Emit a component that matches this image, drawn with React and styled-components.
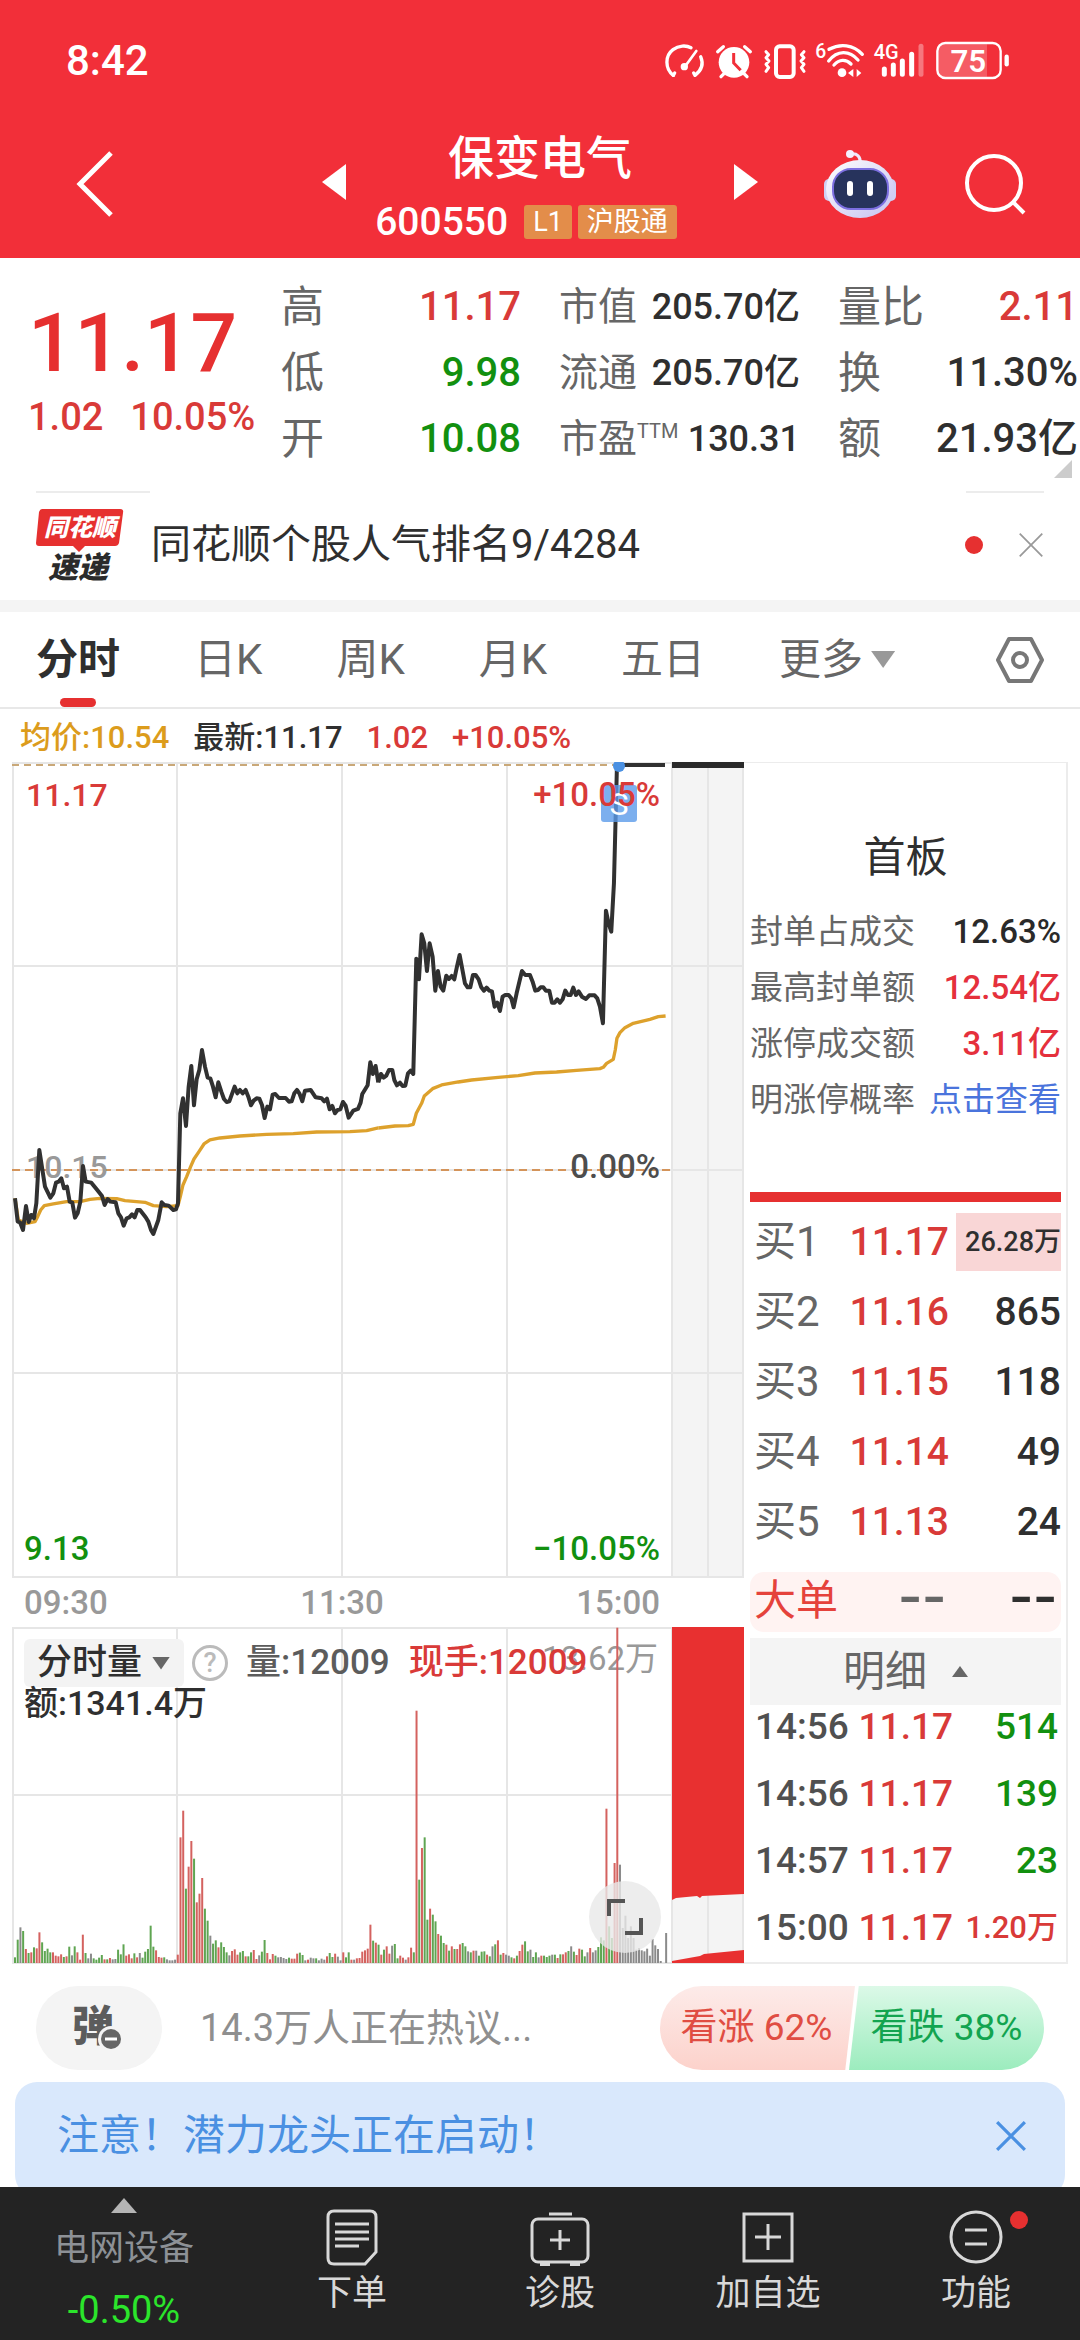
import React from "react";
import styled, { createGlobalStyle } from "styled-components";

const GlobalStyle = createGlobalStyle`
  * {
    box-sizing: border-box;
  }
  body {
    margin: 0;
    background: #fff;
    color: #2f2f2f;
    font-family: Roboto, "Noto Sans CJK SC", sans-serif;
  }
  button {
    margin: 0;
    padding: 0;
    border: 0;
    background: none;
    color: inherit;
    font: inherit;
    cursor: pointer;
  }
  a {
    color: inherit;
    text-decoration: none;
  }
  svg {
    display: block;
  }
`;

const RED = "#d93a38";
const GREEN = "#12900f";

/* chart points, three units to a pixel */
const PRICE_MORNING =
  "45,895 53,965 60,967 69,990 78,918 86,966 94,945 102,955 109,910 118,750 135,860 151,893 160,880 168,848 176,845 184,835 192,865 201,860 209,905 217,908 225,953 233,940 241,905 249,798 257,845 274,848 290,868 306,888 314,915 323,897 331,905 347,907 355,940 363,952 371,977 380,955 388,952 396,943 404,952 412,930 420,930 437,952 445,965 453,990 460,1002 475,960 485,907 493,915 506,917 520,930 528,928 534,910 541,640 549,595 558,678 566,560 574,498 582,616 590,538 598,510 606,450 615,500 623,533 631,535 639,560 647,592 655,547 664,575 672,597 680,606 688,604 704,560 712,580 720,570 728,580 737,570 745,590 753,616 761,602 770,595 778,596 786,615 794,654 802,620 810,628 818,584 826,582 837,594 857,594 867,605 875,604 883,580 891,570 899,582 907,604 915,572 932,570 947,592 965,595 973,604 981,596 989,628 997,618 1005,640 1013,630 1021,628 1029,606 1037,617 1046,653 1060,632 1074,627 1082,608 1087,582 1103,556 1111,487 1119,522 1127,498 1135,547";
const PRICE_AFTERNOON =
  "25,547 33,522 41,533 49,527 57,510 67,510 73,540 81,556 90,548 98,558 106,557 114,520 122,512 130,522 139,176 147,238 155,103 163,130 171,213 179,130 188,170 196,272 204,213 212,260 220,272 229,227 237,237 245,228 253,238 261,200 269,165 285,250 293,262 301,262 309,225 317,225 326,238 334,262 342,272 350,263 358,272 366,274 374,320 382,308 390,333 398,290 406,285 416,285 424,295 431,322 440,280 456,213 466,225 480,225 488,245 496,272 504,270 512,262 520,262 528,272 538,272 546,308 554,308 562,298 570,308 578,298 586,272 594,285 602,285 610,263 618,285 626,274 636,290 648,297 658,286 674,286 682,295 690,320 699,370 708,32 716,70 724,95 732,-50 741,-402";
const AVG_MORNING =
  "45,895 55,960 80,970 105,965 113,950 122,930 133,917 160,912 200,905 240,905 270,898 300,895 350,896 375,902 435,907 460,917 500,920 534,917 541,890 549,855 560,830 572,800 582,777 597,755 612,732 630,720 660,714 720,708 800,703 880,701 950,696 1050,695 1100,692 1135,684";
const AVG_AFTERNOON =
  "25,684 75,678 115,677 130,673 139,640 155,610 163,588 188,566 215,555 265,546 305,540 385,532 445,527 495,519 560,516 620,511 690,506 700,502 710,490 730,478 736,450 741,415 750,398 765,383 790,370 840,358 865,350 887,348";

/* one bar a minute: height and r(ise), g(reen), k (flat) */
const VOLUME =
  "17g 70g 107k 96g 42r 30g 32r 47g 44r 92r 62g 36g 43g 32g 32r 22r 20r 26r 18g 20r 49g 23k 50g 32r 10r 85r 30g 14k 28k 14g 10g 16g 24g 11r 11g 15r 11k 12k 40g 26g 56g 22r 26r 14r 29g 17r 30k 16g 34g 42g 112g 49g 38r 18r 16r 17g 11k 8k 8k 10k 25r 377r 457r 223g 289r 366r 313g 182r 208r 255r 163g 127g 82k 58g 68g 47r 62g 48g 32g 23k 36r 41r 25r 32g 36g 20r 20g 32g 39r 12r 23k 34g 69g 30r 11r 27r 22g 17k 18k 15k 12k 16g 13r 13r 28r 31g 24g 8k 10r 16k 14k 14g 8k 13k 10k 20r 30g 18g 28r 19k 8k 32r 17g 32g 10r 10k 14r 15r 34r 38r 43r 115r 67g 61r 55g 25r 40g 50r 28r 52k 57g 14g 22r 16r 10k 17r 46r 32g 757r 250g 345r 377g 130g 163r 145g 125g 87r 82g 60g 55r 37g 50r 42g 42r 56r 60g 50g 35k 32g 37r 37k 22g 34g 35g 25r 20g 50k 56g 68r 25g 30r 25k 22k 17g 14r 22g 36r 55r 65g 35g 40k 18g 32g 17k 22r 22g 18g 22g 25k 25g 15r 26g 26r 32r 36g 50k 34g 24r 43r 40g 20g 32k 45r 32k 38k 48g 77g 68g 463r 110g 75g 300r 1006r 295k 105k 142k 75k 110k 75k 40k 45k 38k 35k 43k 22k 72k 53k 42k 6k 0k 90k"
    .split(" ")
    .map((item) => ({ size: parseInt(item, 10), kind: item.slice(-1) }));
const BAR_COLORS = { r: "#d4625f", g: "#5fa552", k: "#8b8b8b" };

const QUOTES = [
  [
    { label: "高", value: "11.17", color: RED },
    { label: "低", value: "9.98", color: GREEN },
    { label: "开", value: "10.08", color: GREEN },
  ],
  [
    { label: "市值", value: "205.70亿" },
    { label: "流通", value: "205.70亿" },
    { label: "市盈", note: "TTM", value: "130.31" },
  ],
  [
    { label: "量比", value: "2.11", color: RED },
    { label: "换", value: "11.30%" },
    { label: "额", value: "21.93亿" },
  ],
];

const LIMIT_ROWS = [
  { label: "封单占成交", value: "12.63%", color: "#2a2a2a" },
  { label: "最高封单额", value: "12.54亿", color: "#e5303c" },
  { label: "涨停成交额", value: "3.11亿", color: "#e5303c" },
];

const BUY_ROWS = [
  { label: "买1", price: "11.17", amount: "26.28万", active: true },
  { label: "买2", price: "11.16", amount: "865" },
  { label: "买3", price: "11.15", amount: "118" },
  { label: "买4", price: "11.14", amount: "49" },
  { label: "买5", price: "11.13", amount: "24" },
];

const DEALS = [
  { time: "14:56", price: "11.17", amount: "514" },
  { time: "14:56", price: "11.17", amount: "139" },
  { time: "14:57", price: "11.17", amount: "23" },
  { time: "15:00", price: "11.17", amount: "1.20万", up: true },
];

const StatusIcons = () => (
  <svg width="347" height="40" viewBox="69 60 1041 120" fill="none" stroke="#fff">
    <g strokeWidth="10" strokeLinecap="round">
      <path d="M100 163 C74 142 75 104 99 86 C116 73 138 72 153 80" />
      <path d="M182 107 C191 128 185 148 165 163 M100 163 L104 156 M165 163 L161 156" />
      <path d="M134 138 L169 90" strokeWidth="8" />
      <circle cx="133" cy="137" r="6" fill="#fff" />
    </g>
    <circle cx="282" cy="124" r="46" fill="#fff" stroke="none" />
    <path d="M233 92 L250 77 M331 92 L314 77 M252 158 L243 167 M312 158 L321 167" strokeWidth="10" strokeLinecap="round" />
    <path d="M281 96 V126 L302 148" stroke="#f22f39" strokeWidth="9" />
    <rect x="408" y="76" width="53" height="92" rx="11" strokeWidth="12" />
    <path
      d="M378 92 L386 101 L378 110 L387 120 L378 130 L386 140 L378 151 M492 92 L484 101 L492 110 L483 120 L492 130 L484 140 L492 151"
      strokeWidth="9"
      strokeLinecap="round"
      strokeLinejoin="round"
    />
    <text x="526" y="112" fill="#fff" stroke="none" fontSize="58" fontWeight="500">6</text>
    <path d="M567 85 C600 67 640 70 667 100 M566 120 C592 87 628 87 654 117 M582 132 C598 114 618 114 633 129" strokeWidth="10" strokeLinecap="round" />
    <circle cx="606" cy="155" r="13" fill="#fff" stroke="none" />
    <path d="M640 144 V168 L624 156 Z M650 144 V168 L664 156 Z" fill="#fff" stroke="none" />
    <text x="701" y="115" fill="#fff" stroke="none" fontSize="60" fontWeight="500">4G</text>
    <g strokeWidth="15" strokeLinecap="round">
      <path d="M733 144 V160 M760 132 V160 M787 120 V160 M815 100 V160" />
      <path d="M843 76 V160" opacity="0.35" />
    </g>
    <path d="M894 86 Q894 70 910 70 H1041 V167 H910 Q894 167 894 151 Z" fill="#fff" opacity="0.22" stroke="none" />
    <rect x="892" y="66" width="190" height="105" rx="24" strokeWidth="7" />
    <path d="M1100 107 V130" strokeWidth="13" strokeLinecap="round" />
    <text x="985" y="153" fill="#fff" stroke="none" fontSize="94" fontWeight="600" textAnchor="middle">75</text>
  </svg>
);

const RobotIcon = () => (
  <svg width="74" height="70" viewBox="0 0 74 70">
    <defs>
      <linearGradient id="shell" x1="0" y1="0" x2="1" y2="1">
        <stop offset="0" stopColor="#ffffff" />
        <stop offset="1" stopColor="#c5c1f0" />
      </linearGradient>
    </defs>
    <path d="M37 14 C38 8 34 4 28 5" fill="none" stroke="#efeafd" strokeWidth="3" />
    <circle cx="27" cy="5" r="4" fill="#f4f1ff" />
    <rect x="1" y="30" width="10" height="22" rx="5" fill="#cfd0f4" />
    <rect x="63" y="30" width="10" height="22" rx="5" fill="#cfd0f4" />
    <ellipse cx="37" cy="40" rx="34" ry="29" fill="url(#shell)" />
    <rect x="10" y="20" width="55" height="40" rx="18" fill="#27335c" stroke="#7c6fe0" strokeWidth="2" />
    <rect x="24" y="32" width="6" height="15" rx="3" fill="#fff" />
    <rect x="44" y="32" width="6" height="15" rx="3" fill="#fff" />
  </svg>
);

const BrandIcon = () => (
  <svg width="88" height="84" viewBox="0 -4 88 84">
    <path d="M6 2 H84 Q88 2 87 6 L83 36 Q82 39 79 39 H49 L43 45 L37 39 H3 Q0 39 0 36 L3 5 Q4 2 6 2 Z" fill="#e6302f" />
    <text x="44" y="29" textAnchor="middle" fontSize="24" fontWeight="900" fontStyle="italic" fill="#fff">同花顺</text>
    <text x="42" y="71" textAnchor="middle" fontSize="30" fontWeight="900" fontStyle="italic" fill="#2b2b2b">速递</text>
  </svg>
);

const Cross = ({ size, width }) => (
  <svg width={size} height={size} viewBox="0 0 30 30" fill="none" stroke="currentColor" strokeWidth={width}>
    <path d="M2 2 L28 28 M28 2 L2 28" />
  </svg>
);

const PriceChart = () => (
  <ChartSvg viewBox="0 0 732 816" role="img" aria-label="分时">
    <rect x="660" y="1" width="71" height="814" fill="#f4f4f4" />
    <g stroke="#e6e6e6" strokeWidth="2">
      <path d="M1 1 V815 M165 1 V815 M330 1 V815 M495 1 V815 M660 1 V815 M696 1 V815 M731 1 V815" />
      <path d="M0 1 H732 M0 204 H732 M0 408 H732 M0 611 H732 M0 815 H732" />
    </g>
    <path d="M0 3 H604" stroke="#c9a878" strokeWidth="2" strokeDasharray="7 5" />
    <path d="M0 408 H660" stroke="#d4945a" strokeWidth="2" strokeDasharray="8 5" />
    <text x="14" y="416" fontSize="32" fontWeight="500" fill="#999">10.15</text>
    <g transform="translate(-12 138) scale(0.3333)" fill="none" strokeLinejoin="round">
      <g stroke="#dda12c" strokeWidth="10">
        <polyline points={AVG_MORNING} />
        <polyline points={AVG_AFTERNOON} transform="translate(1110 0)" />
      </g>
      <g stroke="#313131" strokeWidth="12">
        <polyline points={PRICE_MORNING} />
        <polyline points={PRICE_AFTERNOON} transform="translate(1110 0)" />
      </g>
    </g>
    <path d="M605 3 H653" stroke="#313131" strokeWidth="4" />
    <path d="M660 3 H732" stroke="#2a2a2a" strokeWidth="6" />
    <circle cx="607" cy="4" r="6" fill="#4a90e2" />
    <rect x="589" y="23" width="36" height="37" rx="3" fill="#5b9bea" opacity="0.8" />
    <text x="607" y="53" textAnchor="middle" fontSize="32" fill="#fff">S</text>
    <g fontSize="33" fontWeight="500">
      <text x="14" y="44" fontSize="32" fill={RED}>11.17</text>
      <text x="648" y="44" fill={RED} textAnchor="end">+10.05%</text>
      <text x="648" y="416" fill="#4d4d4d" textAnchor="end">0.00%</text>
      <text x="12" y="798" fill={GREEN}>9.13</text>
      <text x="648" y="798" fill={GREEN} textAnchor="end">−10.05%</text>
    </g>
  </ChartSvg>
);

const VolumeChart = () => (
  <ChartSvg viewBox="0 0 732 337" role="img" aria-label="分时量">
    <rect x="660" y="0" width="71" height="336" fill="#f4f4f4" />
    <g stroke="#e6e6e6" strokeWidth="2">
      <path d="M1 1 V336 M165 1 V336 M330 1 V336 M495 1 V336 M660 1 V336 M696 1 V336 M731 1 V336" />
      <path d="M0 1 H732 M0 168 H660 M0 336 H732" />
    </g>
    <text x="646" y="43" fontSize="33" fill="#999" textAnchor="end">13.62万</text>
    <g transform="translate(3 336) scale(0.3333)">
      {VOLUME.map((bar, i) => (
        <rect key={i} x={i * 8.14 - 3} y={-bar.size} width="6" height={bar.size} fill={BAR_COLORS[bar.kind]} />
      ))}
    </g>
    <path d="M660 0 H732 V267 L690 269 L688 271 L685 269 L664 271 L660 273 Z" fill="#e83030" />
    <path d="M660 336 V334 L688 329 L692 327 L732 323 V336 Z" fill="#e83030" />
  </ChartSvg>
);

const App = () => {
  return (
    <Page>
      <GlobalStyle />
      <Top>
        <StatusBar>
          <span>8:42</span>
          <StatusIcons />
        </StatusBar>
        <TitleBar>
          <BackButton aria-label="返回">
            <svg width="38" height="66" viewBox="0 0 38 66" fill="none" stroke="#fff" strokeWidth="5">
              <path d="M35 2 L4 33 L35 64" />
            </svg>
          </BackButton>
          <Switcher>
            <button aria-label="上一只">
              <Triangle $dir="left" $size={24} />
            </button>
            <StockTitle>
              <h1>保变电气</h1>
              <div>
                <b>600550</b>
                <Badge>L1</Badge>
                <Badge>沪股通</Badge>
              </div>
            </StockTitle>
            <button aria-label="下一只">
              <Triangle $dir="right" $size={24} />
            </button>
          </Switcher>
          <TitleActions>
            <button aria-label="助手">
              <RobotIcon />
            </button>
            <button aria-label="搜索">
              <svg width="62" height="62" viewBox="0 0 62 62" fill="none" stroke="#fff" strokeWidth="4">
                <circle cx="30" cy="30" r="27" />
                <path d="M49 49 L60 60" />
              </svg>
            </button>
          </TitleActions>
        </TitleBar>
      </Top>

      <Quote>
        <Now>
          <strong>11.17</strong>
          <div>
            <span>1.02</span>
            <span>10.05%</span>
          </div>
        </Now>
        {QUOTES.map((column, i) => (
          <QuoteColumn key={i} $small={i === 1}>
            {column.map((item) => (
              <div key={item.label}>
                <dt>
                  {item.label}
                  {item.note && <sup>{item.note}</sup>}
                </dt>
                <QuoteValue $color={item.color}>{item.value}</QuoteValue>
              </div>
            ))}
          </QuoteColumn>
        ))}
        <Corner />
      </Quote>

      <News>
        <BrandIcon />
        <a href="#rank">同花顺个股人气排名9/4284</a>
        <Dot />
        <button aria-label="关闭">
          <Cross size={26} width={2} />
        </button>
      </News>

      <Tabs>
        <Tab $active>分时</Tab>
        <Tab>日K</Tab>
        <Tab>周K</Tab>
        <Tab>月K</Tab>
        <Tab>五日</Tab>
        <Tab>
          更多
          <Triangle $dir="down" $size={24} />
        </Tab>
        <SettingsButton aria-label="设置">
          <svg width="50" height="48" viewBox="0 0 50 48" fill="none" stroke="#777" strokeWidth="4" strokeLinejoin="round">
            <path d="M14 3 H36 L47 24 L36 45 H14 L3 24 Z" />
            <circle cx="25" cy="24" r="7" />
          </svg>
        </SettingsButton>
      </Tabs>

      <Legend>
        <Tinted $color="#dc9c1c">均价:10.54</Tinted>
        <span>最新:11.17</span>
        <Tinted $color={RED}>1.02</Tinted>
        <Tinted $color={RED}>+10.05%</Tinted>
      </Legend>

      <Main>
        <Charts>
          <PriceChart />
          <TimeAxis>
            <span>09:30</span>
            <span>11:30</span>
            <span>15:00</span>
          </TimeAxis>
          <VolumeBox>
            <VolumeChart />
            <VolumeInfo>
              <div>
                <IndicatorButton>
                  分时量
                  <Triangle $dir="down" $size={18} />
                </IndicatorButton>
                <HelpButton aria-label="说明">?</HelpButton>
                <Tinted $color="#5c5c5c">量:12009</Tinted>
                <Tinted $color={RED}>现手:12009</Tinted>
              </div>
              <p>额:1341.4万</p>
            </VolumeInfo>
            <ExpandButton aria-label="全屏">
              <svg width="38" height="38" viewBox="0 0 38 38" fill="none" stroke="#555" strokeWidth="4">
                <path d="M3 18 V3 H19 M35 20 V35 H19" />
              </svg>
            </ExpandButton>
          </VolumeBox>
        </Charts>

        <Side>
          <SideTitle>首板</SideTitle>
          <LimitList>
            {LIMIT_ROWS.map((row) => (
              <div key={row.label}>
                <span>{row.label}</span>
                <LimitValue $color={row.color}>{row.value}</LimitValue>
              </div>
            ))}
            <div>
              <span>明涨停概率</span>
              <a href="#chance">点击查看</a>
            </div>
          </LimitList>
          <RedBar />
          <BuyTable>
            <tbody>
              {BUY_ROWS.map((row) => (
                <tr key={row.label}>
                  <th scope="row">{row.label}</th>
                  <td>{row.price}</td>
                  <td>
                    <Amount $active={row.active}>{row.amount}</Amount>
                  </td>
                </tr>
              ))}
            </tbody>
          </BuyTable>
          <BigOrder>
            <span>大单</span>
            <Dashes $color="#666">--</Dashes>
            <Dashes $color="#2f2f2f">--</Dashes>
          </BigOrder>
          <DetailButton>
            明细
            <Triangle $dir="up" $size={16} />
          </DetailButton>
          <DealList>
            {DEALS.map((deal, i) => (
              <Deal key={i} $up={deal.up}>
                <span>{deal.time}</span>
                <span>{deal.price}</span>
                <span>{deal.amount}</span>
              </Deal>
            ))}
          </DealList>
        </Side>
      </Main>

      <Discuss>
        <BulletButton aria-label="弹幕">
          <svg width="54" height="50" viewBox="0 0 54 50">
            <text x="0" y="38" fontSize="42" fontWeight="900" fill="#5c5c5c">弹</text>
            <circle cx="39" cy="36" r="13" fill="#f4f4f4" />
            <circle cx="39" cy="36" r="10" fill="#666" />
            <path d="M33 36 H45" stroke="#fff" strokeWidth="3" />
          </svg>
        </BulletButton>
        <a href="#discuss">14.3万人正在热议...</a>
        <Vote $up>看涨 62%</Vote>
        <Vote>看跌 38%</Vote>
      </Discuss>

      <Banner>
        <a href="#notice">注意！潜力龙头正在启动！</a>
        <button aria-label="关闭">
          <Cross size={32} width={3} />
        </button>
      </Banner>

      <BottomBar>
        <Sector>
          <Triangle $dir="up" $size={26} />
          <span>电网设备</span>
          <em>-0.50%</em>
        </Sector>
        <BarButton>
          <svg width="60" height="60" viewBox="0 0 60 60" fill="none" stroke="currentColor" strokeWidth="3">
            <path d="M12 4 H48 Q54 4 54 10 V45 L43 57 H12 Q6 57 6 51 V10 Q6 4 12 4 Z" />
            <path d="M13 17 H47 M13 25 H47 M13 32 H47 M13 39 H37" />
          </svg>
          下单
        </BarButton>
        <BarButton>
          <svg width="60" height="60" viewBox="0 0 60 60" fill="none" stroke="currentColor" strokeWidth="3">
            <rect x="2" y="12" width="56" height="43" rx="6" />
            <path d="M19 7 H42 M20 33 H40 M30 23 V43" />
            <path d="M10 57 H20 M40 57 H50" strokeWidth="4" />
          </svg>
          诊股
        </BarButton>
        <BarButton>
          <svg width="60" height="60" viewBox="0 0 60 60" fill="none" stroke="currentColor" strokeWidth="3">
            <rect x="6" y="7" width="48" height="47" />
            <path d="M17 30 H43 M30 17 V43" />
          </svg>
          加自选
        </BarButton>
        <BarButton>
          <svg width="60" height="60" viewBox="0 0 60 60" fill="none" stroke="currentColor" strokeWidth="3">
            <circle cx="30" cy="30" r="25" />
            <path d="M19 23 H41 M19 37 H41" />
          </svg>
          功能
          <NewDot />
        </BarButton>
      </BottomBar>
    </Page>
  );
};

const Page = styled.div`
  overflow: hidden;
`;

const Triangle = styled.i`
  display: inline-block;
  width: ${({ $size }) => $size}px;
  height: ${({ $size, $dir }) =>
    $dir === "up" || $dir === "down" ? Math.round($size * 0.7) : Math.round($size * 1.5)}px;
  background: currentColor;
  clip-path: ${({ $dir }) =>
    ({
      up: "polygon(50% 0, 100% 100%, 0 100%)",
      down: "polygon(0 0, 100% 0, 50% 100%)",
      left: "polygon(0 50%, 100% 0, 100% 100%)",
      right: "polygon(0 0, 100% 50%, 0 100%)",
    })[$dir]};
`;

const Tinted = styled.span`
  color: ${({ $color }) => $color};
`;

const Top = styled.header`
  background: #f22f39;
  color: #fff;
`;

const StatusBar = styled.div`
  display: flex;
  align-items: center;
  justify-content: space-between;
  padding: 41px 70px 39px 66px;
  font-size: 42px;
  font-weight: 500;
  line-height: 40px;
`;

const TitleBar = styled.div`
  display: grid;
  grid-template-columns: 1fr 436px 1fr;
  align-items: center;
  padding: 8px 54px;
  padding-bottom: 18px;
`;

const BackButton = styled.button`
  justify-self: start;
  padding-left: 22px;
`;

const Switcher = styled.div`
  display: flex;
  align-items: center;
  justify-content: space-between;
`;

const StockTitle = styled.div`
  text-align: center;

  h1 {
    margin: 0 0 16px;
    font-size: 46px;
    font-weight: 500;
    line-height: 60px;
  }
  div {
    display: flex;
    align-items: center;
    gap: 6px;
    padding-right: 28px;
    line-height: 36px;
  }
  b {
    margin-right: 10px;
    font-size: 39px;
    font-weight: 500;
  }
`;

const Badge = styled.span`
  padding: 0 9px;
  border-radius: 3px;
  background: #e38d4a;
  font-size: 27px;
  line-height: 34px;
`;

const TitleActions = styled.div`
  display: flex;
  align-items: center;
  justify-content: flex-end;
  gap: 67px;
`;

const Quote = styled.section`
  position: relative;
  display: grid;
  grid-template-columns: 215px 240px 241px 1fr;
  column-gap: 38px;
  padding: 16px 2px 18px 28px;
`;

const Now = styled.div`
  padding-top: 20px;
  color: ${RED};
  font-weight: 500;
  white-space: nowrap;

  strong {
    display: block;
    color: #e63030;
    font-size: 82px;
    font-weight: 500;
    line-height: 98px;
  }
  div {
    display: flex;
    gap: 27px;
    font-size: 38px;
    line-height: 50px;
  }
`;

const QuoteColumn = styled.dl`
  margin: 0;
  font-size: ${({ $small }) => ($small ? 36 : 40)}px;
  line-height: 50px;

  div {
    display: flex;
    align-items: center;
    justify-content: space-between;
    height: 66px;
    white-space: nowrap;
  }
  dt {
    color: #666;
    font-size: ${({ $small }) => ($small ? 39 : 43)}px;
  }
  sup {
    font-size: 20px;
    line-height: 20px;
  }
`;

const QuoteValue = styled.dd`
  margin: 0;
  color: ${({ $color }) => $color || "#2f2f2f"};
  font-weight: 500;
`;

const Corner = styled.i`
  position: absolute;
  right: 8px;
  bottom: 12px;
  width: 18px;
  height: 18px;
  background: #ccc;
  clip-path: polygon(100% 0, 100% 100%, 0 100%);
`;

const News = styled.section`
  display: flex;
  align-items: center;
  height: 122px;
  padding: 0 36px;
  border-bottom: 12px solid #f4f4f4;
  background:
    linear-gradient(#ececec, #ececec) 36px 1px / 114px 2px no-repeat,
    linear-gradient(#ececec, #ececec) calc(100% - 36px) 1px / 78px 2px no-repeat;

  a {
    flex: 1;
    margin-left: 27px;
    font-size: 40px;
    line-height: 60px;
  }
  button {
    margin-left: 35px;
    color: #999;
  }
`;

const Dot = styled.i`
  width: 18px;
  height: 18px;
  border-radius: 50%;
  background: #e63030;
`;

const Tabs = styled.nav`
  display: flex;
  gap: 74px;
  height: 97px;
  padding: 0 35px 0 36px;
  border-bottom: 2px solid #e8e8e8;
`;

const Tab = styled.button`
  position: relative;
  display: flex;
  align-items: center;
  gap: 8px;
  color: ${({ $active }) => ($active ? "#2f2f2f" : "#666")};
  font-size: 42px;
  font-weight: ${({ $active }) => ($active ? 700 : 400)};
  line-height: 60px;
  white-space: nowrap;

  &::after {
    content: "";
    display: ${({ $active }) => ($active ? "block" : "none")};
    position: absolute;
    bottom: 0;
    left: calc(50% - 18px);
    width: 36px;
    height: 9px;
    border-radius: 5px;
    background: #e63030;
  }
  i {
    color: #999;
  }
`;

const SettingsButton = styled.button`
  margin-left: auto;
`;

const Legend = styled.div`
  display: flex;
  align-items: center;
  gap: 24px;
  height: 53px;
  padding: 5px 20px 0;
  font-size: 31px;
  font-weight: 500;
  line-height: 44px;
`;

const Main = styled.main`
  display: flex;
  padding: 0 12px;
`;

const Charts = styled.section`
  flex: 1;
  min-width: 0;
`;

const ChartSvg = styled.svg`
  width: 100%;
  height: auto;
`;

const TimeAxis = styled.div`
  display: flex;
  justify-content: space-between;
  padding: 1px 84px 0 12px;
  color: #999;
  font-size: 33px;
  font-weight: 500;
  line-height: 48px;
`;

const VolumeBox = styled.div`
  position: relative;
`;

const VolumeInfo = styled.div`
  position: absolute;
  top: 12px;
  left: 12px;
  font-size: 35px;
  font-weight: 500;
  line-height: 48px;

  div {
    display: flex;
    align-items: center;
    margin-bottom: -8px;
    white-space: nowrap;
  }
  p {
    margin: 0;
    font-size: 34px;
  }
  span {
    margin-right: 19px;
  }
`;

const IndicatorButton = styled.button`
  display: flex;
  align-items: center;
  gap: 10px;
  padding: 0 14px 0 13px;
  border-radius: 6px;
  background: #f3f3f3;

  i {
    color: #666;
  }
`;

const HelpButton = styled.button`
  width: 36px;
  height: 36px;
  margin: 0 18px 0 8px;
  border: 3px solid #bbb;
  border-radius: 50%;
  color: #bbb;
  font-size: 27px;
  line-height: 30px;
`;

const ExpandButton = styled.button`
  position: absolute;
  right: 83px;
  bottom: 11px;
  display: grid;
  place-items: center;
  width: 72px;
  height: 72px;
  border-radius: 50%;
  background: rgba(232, 232, 232, 0.8);
`;

const Side = styled.aside`
  flex: 0 0 324px;
  padding: 65px 5px 12px 6px;
  border: solid #ececec;
  border-width: 1px 2px 2px 0;
`;

const SideTitle = styled.h2`
  margin: 0 0 16px;
  font-size: 42px;
  font-weight: 400;
  line-height: 60px;
  text-align: center;
`;

const LimitList = styled.div`
  margin-bottom: 64px;
  color: #666;
  font-size: 33px;

  div {
    display: flex;
    justify-content: space-between;
    line-height: 56px;
  }
  a {
    color: #4a74dc;
  }
`;

const LimitValue = styled.b`
  color: ${({ $color }) => $color};
  font-weight: 500;
`;

const RedBar = styled.div`
  height: 10px;
  margin-bottom: 5px;
  background: #e63030;
`;

const BuyTable = styled.table`
  width: 100%;
  margin-bottom: 15px;
  border-collapse: collapse;
  font-size: 39px;
  font-weight: 500;
  line-height: 58px;

  tr {
    height: 70px;
  }
  th,
  td {
    padding: 0;
    text-align: right;
  }
  th {
    padding-left: 4px;
    color: #666;
    font-size: 42px;
    font-weight: 400;
    text-align: left;
  }
  td:nth-child(2) {
    color: ${RED};
  }
  td:last-child {
    width: 112px;
  }
`;

const Amount = styled.span`
  display: block;
  margin-left: 7px;
  background: ${({ $active }) => ($active ? "#f9d6d6" : "none")};
  font-size: ${({ $active }) => ($active ? 27 : 39)}px;
`;

const BigOrder = styled.div`
  display: grid;
  grid-template-columns: 1fr 107px 111px;
  height: 60px;
  margin-bottom: 6px;
  padding: 0 4px;
  border-radius: 14px;
  background: #fff3f2;
  color: #e5423b;
  font-size: 42px;
  line-height: 58px;
  white-space: nowrap;
`;

const Dashes = styled.span`
  color: ${({ $color }) => $color};
  font-family: "DejaVu Sans", sans-serif;
  font-size: 66px;
  line-height: 46px;
  text-align: right;
`;

const DetailButton = styled.button`
  display: flex;
  align-items: center;
  justify-content: center;
  gap: 25px;
  width: 100%;
  background: #f4f4f4;
  color: #666;
  font-size: 42px;
  line-height: 67px;
`;

const DealList = styled.ul`
  display: grid;
  gap: 23px;
  margin: 0;
  padding: 0 3px 0 5px;
  list-style: none;
`;

const Deal = styled.li`
  display: grid;
  grid-template-columns: 93px 105px 1fr;
  color: #505050;
  font-size: 37px;
  font-weight: 500;
  line-height: 44px;
  text-align: right;

  span:nth-child(2) {
    color: ${RED};
  }
  span:last-child {
    color: ${({ $up }) => ($up ? RED : GREEN)};
    font-size: ${({ $up }) => ($up ? 31 : 37)}px;
  }
`;

const Discuss = styled.section`
  display: flex;
  align-items: center;
  padding: 22px 36px 12px;
  line-height: 84px;

  a {
    flex: 1;
    margin-left: 38px;
    color: #8f8f8f;
    font-size: 38px;
  }
`;

const BulletButton = styled.button`
  display: grid;
  place-items: center;
  width: 126px;
  height: 84px;
  border-radius: 42px;
  background: #f4f4f4;
`;

const Vote = styled.button`
  width: 195px;
  padding: ${({ $up }) => ($up ? "0 2px 0 0" : "0")};
  margin-left: ${({ $up }) => ($up ? 0 : -6)}px;
  border-radius: ${({ $up }) => ($up ? "42px 0 0 42px" : "0 42px 42px 0")};
  background: ${({ $up }) =>
    $up ? "linear-gradient(#fdebe9, #fcd2cb)" : "linear-gradient(#dcf9e8, #9cecbe)"};
  clip-path: ${({ $up }) =>
    $up ? "polygon(0 0, 100% 0, 95% 100%, 0 100%)" : "polygon(5% 0, 100% 0, 100% 100%, 0 100%)"};
  color: ${({ $up }) => ($up ? "#e04d43" : "#12a450")};
  font-size: 37px;
`;

const Banner = styled.section`
  display: flex;
  align-items: center;
  justify-content: space-between;
  margin: 0 15px -10px;
  padding: 0 38px 8px 42px;
  border-radius: 22px;
  background: #d9e8fc;
  color: #4a90e2;
  font-size: 42px;
  line-height: 107px;
`;

const BottomBar = styled.footer`
  position: relative;
  display: flex;
  height: 153px;
  background: #232323;
  color: #d8d8d8;
  font-size: 35px;
`;

const Sector = styled.button`
  flex: 0 0 248px;
  display: flex;
  flex-direction: column;
  align-items: center;
  padding-top: 11px;
  color: #8d9196;

  i {
    height: 15px;
    color: #b4b4b4;
  }
  span {
    margin: 12px 0;
    line-height: 48px;
  }
  em {
    color: #2be52b;
    font-size: 38px;
    font-style: normal;
    line-height: 50px;
  }
`;

const BarButton = styled.button`
  position: relative;
  flex: 1;
  display: flex;
  flex-direction: column;
  align-items: center;
  gap: 2px;
  padding-top: 20px;
  line-height: 50px;
`;

const NewDot = styled(Dot)`
  position: absolute;
  top: 24px;
  left: calc(50% + 34px);
`;

export default App;
